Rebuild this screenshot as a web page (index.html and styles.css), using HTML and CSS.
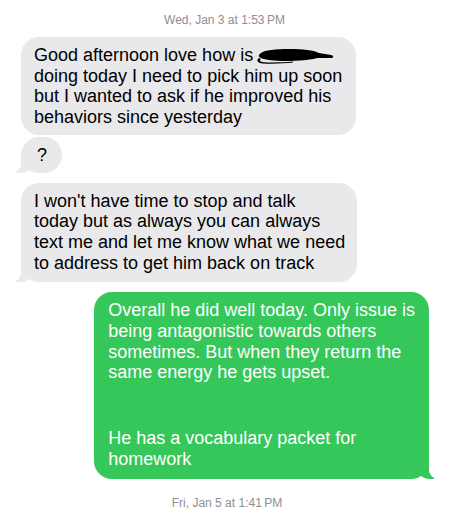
FILE: index.html
```html
<!DOCTYPE html>
<html>
<head>
<meta charset="utf-8">
<link rel="stylesheet" href="styles.css">
</head>
<body>
<div class="thread">
  <div class="stamp">Wed, Jan 3 at 1:53&#8201;PM</div>

  <div class="msg them first">Good afternoon love how is <svg class="redact" width="80" height="18" viewBox="0 0 80 18"><path d="M6 6 C10 3 20 2 35 2 C48 2 58 3 64 6 L76 8 C79 8.5 79 11 76 11 L62 11 C56 13 44 14 30 14 C20 14 10 13 6 11 C3 10 3 8 6 6 Z" fill="#000"/><path d="M4 11 C1 13 2 16 8 16.5 C18 17 30 16.5 38 15.5 L38 14.5 C30 15.3 18 15.7 9 15.2 C5 15 4 13.5 6 12 Z" fill="#000"/></svg><br>doing today I need to pick him up soon<br>but I wanted to ask if he improved his<br>behaviors since yesterday</div>

  <div class="msg them tail q">?</div>

  <div class="msg them tail gap">I won't have time to stop and talk<br>today but as always you can always<br>text me and let me know what we need<br>to address to get him back on track</div>

  <div class="row-me">
    <div class="msg me tail"><p>Overall he did well today. Only issue is<br>being antagonistic towards others<br>sometimes. But when they return the<br>same energy he gets upset.</p><p class="para">He has a vocabulary packet for<br>homework</p></div>
  </div>

  <div class="stamp bottom">Fri, Jan 5 at 1:41&#8201;PM</div>
</div>
</body>
</html>
```

FILE: styles.css
```css
html, body {
  margin: 0;
  padding: 0;
  background: #ffffff;
}

body {
  font-family: "Liberation Sans", Arial, sans-serif;
  width: 449px;
  height: 512px;
  overflow: hidden;
}

.thread {
  display: flex;
  flex-direction: column;
  align-items: flex-start;
  padding: 13px 21px 0 21px;
}

.stamp {
  align-self: center;
  font-size: 12px;
  color: #8e8e93;
  line-height: 15px;
}

.stamp.bottom {
  margin-top: 17px;
  margin-left: 5px;
}

.msg {
  position: relative;
  font-size: 18px;
  line-height: 20.7px;
  padding: 8px 14px 7px 13px;
  border-radius: 18px;
  color: #000;
}

.them {
  background: #e9e9eb;
}

.first {
  margin-top: 9px;
}

.q {
  margin-top: 2px;
  padding: 8px 15px 7px 16px;
}

.gap {
  margin-top: 10px;
  padding-right: 12px;
  padding-bottom: 9px;
}

.redact {
  vertical-align: -4px;
  margin-left: -3px;
}

.tail::before {
  content: "";
  position: absolute;
  z-index: 0;
  bottom: 0;
  height: 18px;
  width: 18px;
}

.tail::after {
  content: "";
  position: absolute;
  z-index: 1;
  bottom: 0;
  height: 18px;
  width: 10px;
  background: #ffffff;
}

.them.tail::before {
  left: -5px;
  background: #e9e9eb;
  border-bottom-right-radius: 14px;
}

.them.tail::after {
  left: -10px;
  border-bottom-right-radius: 9px;
}

.row-me {
  align-self: stretch;
  display: flex;
  justify-content: flex-end;
  margin-top: 10px;
}

.me {
  background: #35c759;
  color: #ffffff;
  margin-right: -1px;
  padding: 8px 14px 9px 14px;
}

.me p {
  margin: 0;
}

.me .para {
  margin-top: 45px;
}

.me.tail::before {
  right: -5px;
  background: #35c759;
  border-bottom-left-radius: 14px;
}

.me.tail::after {
  right: -10px;
  border-bottom-left-radius: 9px;
}
```
